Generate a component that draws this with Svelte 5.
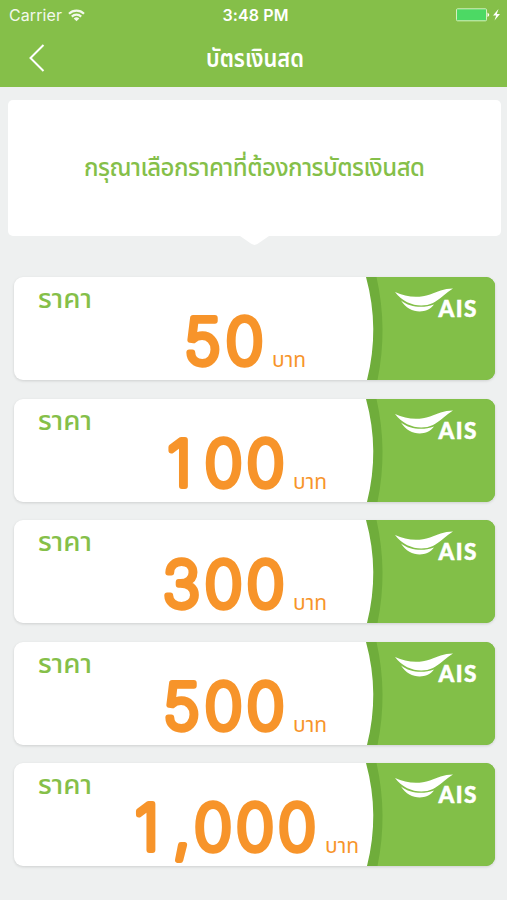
<script lang="ts">
  // centers holds the middle of every character, so the wide digits keep an even pitch
  const amounts = [
    { value: '50', width: 82, centers: [19.5, 61.5] },
    { value: '100', width: 124, centers: [17.5, 61.5, 103.5] },
    { value: '300', width: 124, centers: [19.5, 61.5, 103.5] },
    { value: '500', width: 124, centers: [19.5, 61.5, 103.5] },
    { value: '1,000', width: 188, centers: [17, 52, 83, 125, 167] }
  ]
</script>

<main class="screen">
  <header class="header">
    <div class="status">
      <div class="status-left">
        <span>Carrier</span>
        <svg width="17" height="13" viewBox="0 0 17 13">
          <path d="M1 4.7a10.6 10.6 0 0 1 15 0" class="wifi" />
          <path d="M3.8 7.6a6.7 6.7 0 0 1 9.4 0" class="wifi" />
          <path d="M8.5 12.2 5.7 9.5a4 4 0 0 1 5.6 0z" fill="#fff" />
        </svg>
      </div>
      <span class="status-time">3:48 PM</span>
      <div class="status-right">
        <svg width="46" height="14" viewBox="0 0 46 14">
          <rect x="0.5" y="0.8" width="30" height="12" rx="1" fill="#4cd964" stroke="#d5f0bd" />
          <path d="M31.5 4.5q3.5 2.3 0 4.6z" fill="#fff" />
          <path d="M42.5 1 37 7.6h3.2L38.5 12.5 44 6h-3.2z" fill="#fff" />
        </svg>
      </div>
    </div>
    <div class="nav">
      <button class="back" aria-label="กลับ">
        <svg width="16" height="28" viewBox="0 0 16 28">
          <path d="M14.5 1 1.5 14 14.5 27" />
        </svg>
      </button>
      <svg class="title" width="104" height="44">
        <text x="5" y="31" textLength="98" lengthAdjust="spacingAndGlyphs">บัตรเงินสด</text>
      </svg>
    </div>
  </header>

  <section class="prompt">
    <svg width="344" height="50">
      <text x="1" y="33" textLength="341">กรุณาเลือกราคาที่ต้องการบัตรเงินสด</text>
    </svg>
    <div class="prompt-arrow"></div>
  </section>

  <div class="cards">
    {#each amounts as amount}
      <button class="card">
        <svg class="card-label" width="60" height="44">
          <text x="1" y="30.5" textLength="54" lengthAdjust="spacingAndGlyphs">ราคา</text>
        </svg>
        <span class="card-price">
          <svg class="card-amount" width={amount.width} height="76">
            <text x={amount.centers.join(' ')} y="60">{amount.value}</text>
          </svg>
          <svg class="card-unit" width="34" height="76">
            <text x="0" y="62.5" textLength="34" lengthAdjust="spacingAndGlyphs">บาท</text>
          </svg>
        </span>
        <svg class="card-brand" width="129" height="103" viewBox="0 0 129 103">
          <path d="M0 0Q14 51.5 1 103H129V0z" fill="#6fad3b" />
          <path d="M10.5 0Q22 51.5 11.5 103H129V0z" fill="#82bf48" />
          <path d="M29 15C40 20 52 21.5 64 17.5C71 15 78 11.5 87 11.5C80 15.5 74 22.5 67 26C55 31.5 39 28 29 15z" fill="#fff" />
          <path d="M35 23.5C44 30.5 57 31.5 68 27.5C61 37.5 43 37 35 23.5z" fill="#fff" />
          <text class="brand-name" x="72.5" y="40" textLength="38">AIS</text>
        </svg>
      </button>
    {/each}
  </div>
</main>

<style>
  :global(body) {
    margin: 0;
    background: #eef0f0;
  }
  .screen {
    width: 507px;
    height: 900px;
    overflow: hidden;
    background: #eef0f0;
    font-family: "Noto Sans", "Noto Sans Thai", "Liberation Sans", sans-serif;
  }
  button {
    border: 0;
    padding: 0;
    font: inherit;
    text-align: left;
  }
  .header {
    height: 87px;
    background: #85bf49;
    color: #fff;
  }
  .status {
    display: grid;
    grid-template-columns: 1fr auto 1fr;
    align-items: center;
    height: 30px;
    padding: 0 5px 0 9px;
    font-family: Inter, sans-serif;
    font-size: 16px;
    letter-spacing: 0.1px;
  }
  .status-left {
    display: flex;
    align-items: center;
    gap: 6px;
    opacity: 0.9;
  }
  .status-time {
    font-weight: 600;
  }
  .status-right {
    display: flex;
    justify-content: flex-end;
  }
  .wifi {
    fill: none;
    stroke: #fff;
    stroke-width: 2.2;
  }
  .nav {
    display: grid;
    grid-template-columns: 1fr auto 1fr;
    align-items: center;
    height: 56px;
    padding: 0 30px 0 29px;
  }
  .back {
    display: flex;
    background: none;
  }
  .back path {
    fill: none;
    stroke: #fff;
    stroke-width: 2;
  }
  .title {
    overflow: visible;
  }
  .title text {
    fill: #fff;
    font-size: 24px;
    font-weight: 600;
  }
  .prompt {
    position: relative;
    display: flex;
    justify-content: center;
    align-items: center;
    width: 493px;
    height: 136px;
    margin: 13px 7px 0 8px;
    border-radius: 5px;
    background: #fff;
  }
  .prompt text {
    fill: #85bf49;
    font-size: 24px;
    font-weight: 500;
  }
  .prompt-arrow {
    position: absolute;
    top: 100%;
    left: 232px;
    width: 29px;
    height: 9px;
    background: #fff;
    clip-path: polygon(0 0, 100% 0, 60% 90%, 50% 100%, 40% 90%);
  }
  .cards {
    display: flex;
    flex-direction: column;
    gap: 18.5px;
    padding: 41px 12px 0 14px;
  }
  .card {
    display: grid;
    grid-template-columns: 1fr 129px;
    height: 103px;
    overflow: hidden;
    border-radius: 9px;
    background: #fff;
    box-shadow: 0 1px 3px #00000022;
  }
  .card-label {
    grid-area: 1 / 1;
    margin-left: 23px;
  }
  .card-label text {
    fill: #85bf49;
    font-size: 27px;
    font-weight: 500;
  }
  .card-price {
    grid-area: 1 / 1;
    display: flex;
    justify-content: center;
    align-self: end;
    gap: 7px;
    height: 76px;
    padding-left: 109px;
  }
  .card-amount,
  .card-unit {
    overflow: visible;
  }
  .card-amount text {
    fill: #f7942a;
    stroke: #f7942a;
    stroke-width: 6px;
    stroke-linejoin: round;
    text-anchor: middle;
    font-family: Inter, sans-serif;
    font-size: 63px;
    font-weight: 200;
  }
  .card-unit text {
    fill: #f7942a;
    font-size: 22px;
  }
  .card-brand {
    grid-area: 1 / 2;
  }
  .brand-name {
    fill: #fff;
    stroke: #fff;
    stroke-width: 0.5px;
    font-family: Lato, sans-serif;
    font-size: 22.5px;
    font-weight: 900;
  }
</style>
